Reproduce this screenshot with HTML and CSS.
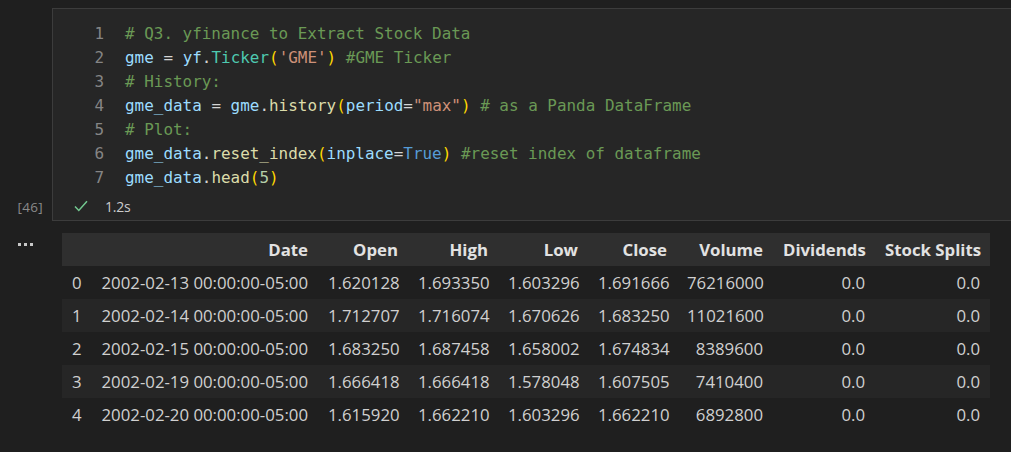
FILE: index.html
```html
<!DOCTYPE html>
<html>
<head>
<meta charset="utf-8">
<link rel="stylesheet" href="styles.css">
</head>
<body>
<div class="notebook">
  <div class="cell-row">
    <div class="gutter">
      <span class="exec-count">[46]</span>
    </div>
    <div class="cell">
      <div class="code">
        <div class="line"><span class="ln">1</span><span class="src"><span class="c"># Q3. yfinance to Extract Stock Data</span></span></div>
        <div class="line"><span class="ln">2</span><span class="src"><span class="v">gme</span> <span class="o">=</span> <span class="v">yf</span><span class="o">.</span><span class="t">Ticker</span><span class="b">(</span><span class="s">'GME'</span><span class="b">)</span> <span class="c">#GME Ticker</span></span></div>
        <div class="line"><span class="ln">3</span><span class="src"><span class="c"># History:</span></span></div>
        <div class="line"><span class="ln">4</span><span class="src"><span class="v">gme_data</span> <span class="o">=</span> <span class="v">gme</span><span class="o">.</span><span class="f">history</span><span class="b">(</span><span class="v">period</span><span class="o">=</span><span class="s">"max"</span><span class="b">)</span> <span class="c"># as a Panda DataFrame</span></span></div>
        <div class="line"><span class="ln">5</span><span class="src"><span class="c"># Plot:</span></span></div>
        <div class="line"><span class="ln">6</span><span class="src"><span class="v">gme_data</span><span class="o">.</span><span class="f">reset_index</span><span class="b">(</span><span class="v">inplace</span><span class="o">=</span><span class="k">True</span><span class="b">)</span> <span class="c">#reset index of dataframe</span></span></div>
        <div class="line"><span class="ln">7</span><span class="src"><span class="v">gme_data</span><span class="o">.</span><span class="f">head</span><span class="b">(</span><span class="n">5</span><span class="b">)</span></span></div>
      </div>
      <div class="status">
        <svg class="check" width="14" height="12" viewBox="0 0 14 12"><path d="M1 6.5 L4.8 10.5 L13 1.2" fill="none" stroke="#73c991" stroke-width="1.5"/></svg>
        <span class="duration">1.2s</span>
      </div>
    </div>
  </div>
  <div class="output-row">
    <div class="out-gutter">
      <svg class="dots" width="16" height="4" viewBox="0 0 16 4"><rect x="0" y="0" width="3" height="3" fill="#c8c8c8"/><rect x="6" y="0" width="3" height="3" fill="#c8c8c8"/><rect x="12" y="0" width="3" height="3" fill="#c8c8c8"/></svg>
    </div>
    <table class="df">
      <colgroup>
        <col class="w-idx"><col class="w-date"><col class="w-num"><col class="w-num"><col class="w-num"><col class="w-close"><col class="w-vol"><col class="w-div"><col class="w-split">
      </colgroup>
      <thead>
        <tr><th></th><th>Date</th><th>Open</th><th>High</th><th>Low</th><th>Close</th><th>Volume</th><th>Dividends</th><th>Stock Splits</th></tr>
      </thead>
      <tbody>
        <tr><td class="idx">0</td><td>2002-02-13 00:00:00-05:00</td><td>1.620128</td><td>1.693350</td><td>1.603296</td><td>1.691666</td><td>76216000</td><td>0.0</td><td>0.0</td></tr>
        <tr><td class="idx">1</td><td>2002-02-14 00:00:00-05:00</td><td>1.712707</td><td>1.716074</td><td>1.670626</td><td>1.683250</td><td>11021600</td><td>0.0</td><td>0.0</td></tr>
        <tr><td class="idx">2</td><td>2002-02-15 00:00:00-05:00</td><td>1.683250</td><td>1.687458</td><td>1.658002</td><td>1.674834</td><td>8389600</td><td>0.0</td><td>0.0</td></tr>
        <tr><td class="idx">3</td><td>2002-02-19 00:00:00-05:00</td><td>1.666418</td><td>1.666418</td><td>1.578048</td><td>1.607505</td><td>7410400</td><td>0.0</td><td>0.0</td></tr>
        <tr><td class="idx">4</td><td>2002-02-20 00:00:00-05:00</td><td>1.615920</td><td>1.662210</td><td>1.603296</td><td>1.662210</td><td>6892800</td><td>0.0</td><td>0.0</td></tr>
      </tbody>
    </table>
  </div>
</div>
</body>
</html>
```
FILE: styles.css
```css
html, body {
  margin: 0;
  padding: 0;
  background: #1f1f1f;
  overflow: hidden;
}
body {
  width: 1011px;
  height: 452px;
  font-family: "Open Sans", "Noto Sans", sans-serif;
  color: #cccccc;
}
.notebook {
  padding-top: 8px;
}
.cell-row {
  display: flex;
}
.gutter {
  width: 52px;
  flex: none;
  display: flex;
  flex-direction: column;
  justify-content: flex-end;
  align-items: flex-end;
  padding-bottom: 6px;
  box-sizing: border-box;
}
.exec-count {
  font-size: 13.5px;
  color: #8a8a8a;
  padding-right: 9px;
  line-height: 16px;
  letter-spacing: 0.3px;
}
.cell {
  flex: 1;
  background: #262626;
  border: 1px solid #3c3c3c;
  border-right: none;
  height: 213px;
  box-sizing: border-box;
}
.code {
  padding-top: 13px;
  font-family: "DejaVu Sans Mono", "Liberation Mono", monospace;
  font-size: 15.95px;
}
.line {
  display: flex;
  height: 24px;
  line-height: 24px;
  white-space: pre;
}
.ln {
  width: 30px;
  margin-left: 21px;
  text-align: right;
  color: #858585;
  flex: none;
}
.src {
  margin-left: 21px;
  color: #d4d4d4;
}
.c { color: #6a9955; }
.v { color: #9cdcfe; }
.o { color: #d4d4d4; }
.t { color: #4ec9b0; }
.f { color: #dcdcaa; }
.s { color: #ce9178; }
.b { color: #ffd700; }
.k { color: #569cd6; }
.n { color: #b5cea8; }
.status {
  display: flex;
  align-items: center;
  height: 29px;
  padding-top: 3px;
  box-sizing: border-box;
  padding-left: 21px;
}
.check {
  display: block;
}
.duration {
  margin-left: 17px;
  font-size: 14px;
  color: #cccccc;
  letter-spacing: -0.2px;
}
.output-row {
  display: flex;
  margin-top: 12px;
}
.out-gutter {
  width: 62px;
  flex: none;
  padding-left: 18px;
  padding-top: 10px;
  box-sizing: border-box;
}
.dots {
  display: block;
}
.df {
  border-collapse: collapse;
  border-spacing: 0;
  table-layout: fixed;
  width: 928px;
  font-size: 16.8px;
}
.w-idx { width: 29px; }
.w-date { width: 227px; }
.w-num { width: 90px; }
.w-close { width: 89px; }
.w-vol { width: 96px; }
.w-div { width: 102px; }
.w-split { width: 115px; }
.df th, .df td {
  height: 33px;
  padding: 0 10px;
  text-align: right;
  vertical-align: middle;
  white-space: nowrap;
  box-sizing: border-box;
}
.df th {
  font-weight: 700;
  color: #e2e2e2;
  background: #2f2f2f;
}
.df td {
  color: #d0d0d0;
}
.df td.idx {
  text-align: left;
}
.df tbody tr:nth-child(even) td {
  background: #262626;
}
```
